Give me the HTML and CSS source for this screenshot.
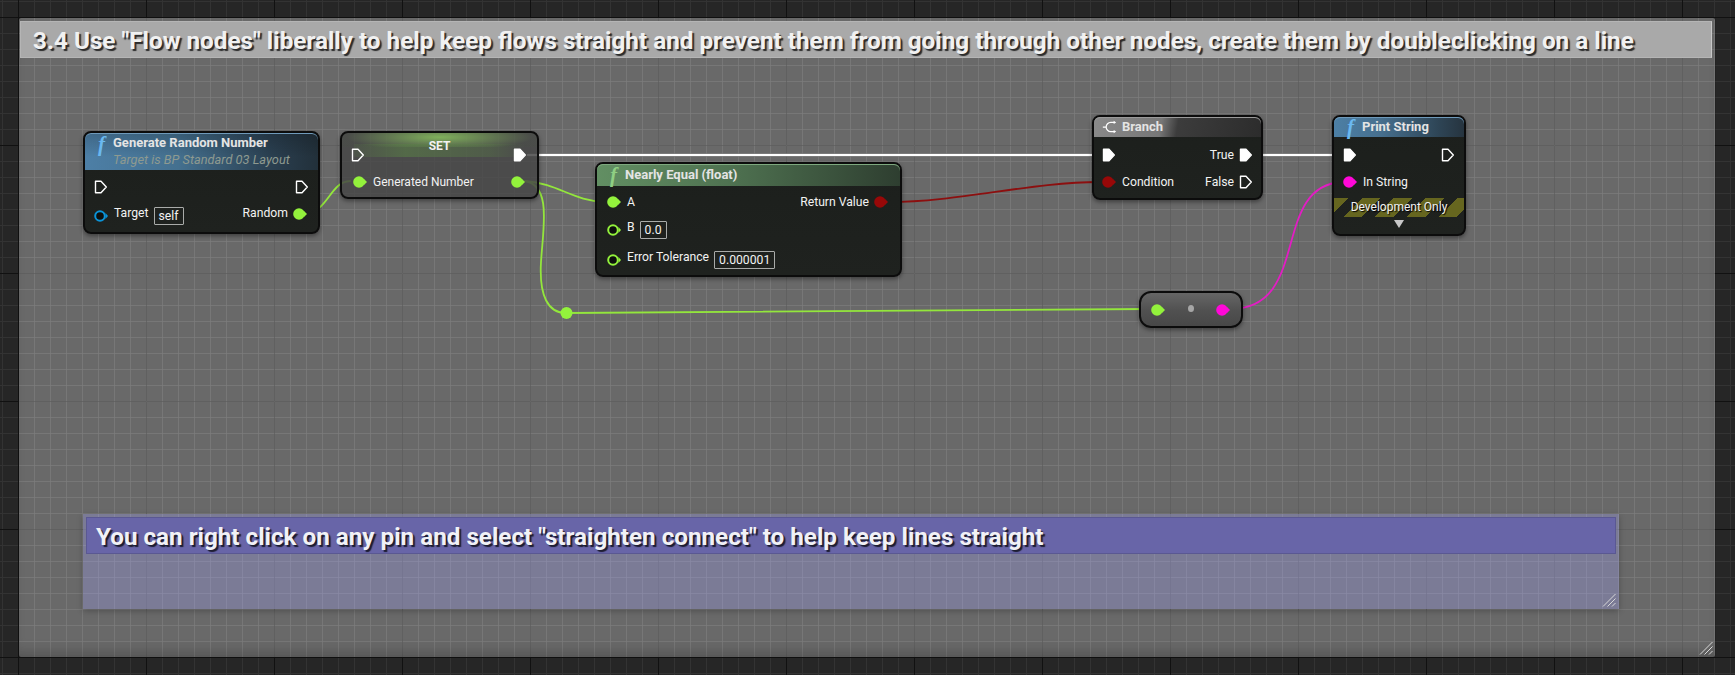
FILE: index.html
```html
<!DOCTYPE html>
<html lang="en">
<head>
<meta charset="utf-8">
<title>Blueprint graph</title>
<link rel="stylesheet" href="styles.css">
</head>
<body>
<svg class="defs" width="0" height="0">
  <symbol id="exec" viewBox="0 0 14 14"><path d="M1.5 1.2H7L12.300 7L7 12.800H1.500Z" fill="none" stroke="#fff" stroke-width="1.4" stroke-linejoin="round"/></symbol>
  <symbol id="exec-on" viewBox="0 0 14 14"><path d="M1.5 1.2H7L12.300 7L7 12.800H1.500Z" fill="#fff" stroke="#fff" stroke-width="1.4" stroke-linejoin="round"/></symbol>
  <symbol id="pin" viewBox="0 0 14 14"><path d="M11 4L14 7L11 10Z" fill="currentColor"/><circle cx="6" cy="7" r="5.800" fill="currentColor"/></symbol>
  <symbol id="pin-off" viewBox="0 0 14 14"><path d="M11.500 4L14 7L11.500 10Z" fill="currentColor"/><circle cx="6" cy="7" r="4.800" fill="#0d0f0d" stroke="currentColor" stroke-width="2"/></symbol>
  <symbol id="grip" viewBox="0 0 14 14"><path d="M1 13.500L13.500 1M5.500 13.500L13.500 5.500M10 13.500L13.500 10" fill="none" stroke="#d8d8d8" stroke-width="1"/></symbol>
</svg>

<main class="graph">
  <section class="frame">
    <h1 class="frame-title">3.4 Use "Flow nodes" liberally to help keep flows straight and prevent them from going through other nodes, create them by doubleclicking on a line</h1>
    <svg class="grip grip-frame"><use href="#grip"/></svg>
  </section>

  <section class="note">
    <h2 class="note-title">You can right click on any pin and select "straighten connect" to help keep lines straight</h2>
    <svg class="grip grip-note"><use href="#grip"/></svg>
  </section>

  <svg class="wires" width="1735" height="675" viewBox="0 0 1735 675">
    <g fill="none" stroke-linecap="round">
      <path class="wire-glow" d="M528 155H1100M1252 155H1342"/>
      <path class="wire-exec" d="M528 155H1100M1252 155H1342"/>
      <path class="wire-float" d="M305 214C328 212 330 182 350 181"/>
      <path class="wire-float" d="M525 181C560 184 572 201 606 202"/>
      <path class="wire-float" d="M525 181C552 186 543 228 541 262C539 296 548 313 566 313"/>
      <path class="wire-float" d="M566 313L1150 309"/>
      <path class="wire-bool" d="M888 202C960 202 1030 182 1100 182"/>
      <path class="wire-str" d="M1230 309C1312 309 1270 186 1342 182"/>
    </g>
    <circle cx="566.500" cy="313" r="6" fill="#93f23c"/>
  </svg>

  <article class="node node-random">
    <header class="head head-blue head-tall">
      <span class="fn fn-blue">f</span>
      <div class="head-text">
        <div class="title">Generate Random Number</div>
        <div class="subtitle">Target is BP Standard 03 Layout</div>
      </div>
    </header>
    <div class="row row-exec">
      <svg class="icon"><use href="#exec"/></svg>
      <svg class="icon"><use href="#exec"/></svg>
    </div>
    <div class="row row-data row-up">
      <span class="cell"><svg class="icon blue"><use href="#pin-off"/></svg><span>Target</span><span class="value">self</span></span>
      <span class="cell"><span>Random</span><svg class="icon green pin-raised"><use href="#pin"/></svg></span>
    </div>
  </article>

  <article class="node node-set">
    <div class="set-glow"></div>
    <div class="set-band"></div>
    <div class="set-title">SET</div>
    <div class="row row-exec">
      <svg class="icon"><use href="#exec"/></svg>
      <svg class="icon"><use href="#exec-on"/></svg>
    </div>
    <div class="row row-data">
      <span class="cell"><svg class="icon green"><use href="#pin"/></svg><span>Generated Number</span></span>
      <svg class="icon green"><use href="#pin"/></svg>
    </div>
  </article>

  <article class="node node-equal">
    <header class="head head-green">
      <span class="fn fn-green">f</span>
      <div class="title">Nearly Equal (float)</div>
    </header>
    <div class="row row-a">
      <span class="cell"><svg class="icon green"><use href="#pin"/></svg><span>A</span></span>
      <span class="cell"><span>Return Value</span><svg class="icon red"><use href="#pin"/></svg></span>
    </div>
    <div class="row row-b row-up">
      <span class="cell"><svg class="icon green"><use href="#pin-off"/></svg><span>B</span><span class="value">0.0</span></span>
    </div>
    <div class="row row-c row-up">
      <span class="cell"><svg class="icon green"><use href="#pin-off"/></svg><span>Error Tolerance</span><span class="value">0.000001</span></span>
    </div>
  </article>

  <article class="node node-branch">
    <header class="head head-gray">
      <svg class="branch-icon" viewBox="0 0 18 16"><path d="M1 8H5M15 2.500H10.500C7.500 2.500 5 5 5 8C5 11 7.500 13.500 10.500 13.500H15" fill="none" stroke="#fff" stroke-width="1.500"/><path d="M14 0.500L17 2.500L14 4.500ZM14 11.500L17 13.500L14 15.500Z" fill="#fff"/></svg>
      <div class="title">Branch</div>
    </header>
    <div class="row row-exec">
      <svg class="icon"><use href="#exec-on"/></svg>
      <span class="cell"><span>True</span><svg class="icon"><use href="#exec-on"/></svg></span>
    </div>
    <div class="row row-data">
      <span class="cell"><svg class="icon red"><use href="#pin"/></svg><span>Condition</span></span>
      <span class="cell"><span>False</span><svg class="icon"><use href="#exec"/></svg></span>
    </div>
  </article>

  <article class="node node-print">
    <header class="head head-blue">
      <span class="fn fn-blue">f</span>
      <div class="title">Print String</div>
    </header>
    <div class="row row-exec">
      <svg class="icon"><use href="#exec-on"/></svg>
      <svg class="icon"><use href="#exec"/></svg>
    </div>
    <div class="row row-data">
      <span class="cell"><svg class="icon magenta"><use href="#pin"/></svg><span>In String</span></span>
    </div>
    <div class="dev">Development Only</div>
    <div class="chevron"></div>
  </article>

  <article class="node node-reroute">
    <svg class="icon green"><use href="#pin"/></svg>
    <span class="knot"></span>
    <svg class="icon magenta"><use href="#pin"/></svg>
  </article>
</main>
</body>
</html>
```
FILE: styles.css
```css
* { box-sizing: border-box; }
html, body { margin: 0; padding: 0; background: #262626; }
.defs { position: absolute; }

.graph {
  position: relative;
  width: 1735px;
  height: 675px;
  overflow: hidden;
  font-family: Roboto, "Liberation Sans", sans-serif;
  color: #f2f2f2;
  background-color: #262626;
  background-image:
    linear-gradient(90deg, #111 1px, transparent 1px),
    linear-gradient(#111 1px, transparent 1px),
    linear-gradient(90deg, #333 1px, transparent 1px),
    linear-gradient(#333 1px, transparent 1px);
  background-size: 128px 128px, 128px 128px, 16px 16px, 16px 16px;
  background-position: 18px 17px, 18px 17px, 2px 1px, 2px 1px;
}

.frame {
  position: absolute;
  left: 19px;
  top: 18px;
  width: 1696px;
  height: 639px;
  padding: 3px 3px 0 1px;
  background-color: rgba(255, 255, 255, 0.31);
  background-image:
    linear-gradient(90deg, rgba(255, 255, 255, 0.03) 1px, transparent 1px),
    linear-gradient(rgba(255, 255, 255, 0.03) 1px, transparent 1px);
  background-size: 16px 16px;
  background-position: 15px 15px;
  border-radius: 2px;
  box-shadow: inset 0 -12px 14px -8px rgba(0, 0, 0, 0.22), 0 0 1px #000;
}
.frame-title {
  margin: 0;
  height: 37px;
  padding-left: 12px;
  font-size: 24.27px;
  line-height: 38px;
  font-weight: 700;
  color: #f1f1f1;
  white-space: nowrap;
  overflow: hidden;
  background: #a9a9a9;
  border: 1px solid #b5b5b5;
  border-right-color: #c8c8c8;
  text-shadow: 2px 2px 1px #2a2a2a;
}

.note {
  position: absolute;
  left: 83px;
  top: 514px;
  width: 1536px;
  height: 95px;
  padding: 3px;
  background: rgba(164, 164, 254, 0.3);
  box-shadow: 0 2px 6px rgba(0, 0, 0, 0.25);
}
.note-title {
  margin: 0;
  height: 37px;
  padding-left: 9px;
  font-size: 24.23px;
  line-height: 38px;
  font-weight: 700;
  color: #f1f1f6;
  white-space: nowrap;
  overflow: hidden;
  background: #6865a8;
  border: 1px solid #5a5892;
  text-shadow: 2px 2px 1px #1c1c30;
}

.grip { position: absolute; width: 14px; height: 14px; }
.grip-frame { right: 2px; bottom: 2px; }
.grip-note { right: 3px; bottom: 2px; }

.wires { position: absolute; left: 0; top: 0; }
.wire-exec { stroke: #fff; stroke-width: 2.4; }
.wire-glow { stroke: rgba(60, 60, 60, 0.6); stroke-width: 4; }
.wire-float { stroke: #93e63c; stroke-width: 1.8; }
.wire-bool { stroke: #8c0f0f; stroke-width: 1.8; }
.wire-str { stroke: #e31cc4; stroke-width: 1.8; }

.node {
  position: absolute;
  font-size: 12.2px;
  line-height: 16px;
  background: linear-gradient(#1c1f1c, #1f221f);
  border: 2px solid #0c0c0c;
  border-radius: 8px;
  box-shadow: 0 2px 4px rgba(0, 0, 0, 0.4);
}
.node-random { left: 83px; top: 131px; width: 237px; height: 103px; }
.node-set { left: 340px; top: 131px; width: 199px; height: 68px; background: rgba(70, 70, 70, 0.85); overflow: hidden; }
.node-equal { left: 595px; top: 162px; width: 307px; height: 115px; }
.node-branch { left: 1092px; top: 115px; width: 171px; height: 85px; }
.node-print { left: 1332px; top: 115px; width: 134px; height: 121px; }

.node-reroute {
  left: 1139px;
  top: 291px;
  width: 104px;
  height: 37px;
  padding: 0 11px 0 10px;
  display: flex;
  align-items: center;
  justify-content: space-between;
  border-radius: 12px;
  background: linear-gradient(#666, #505050 55%, #484848);
}
.knot { width: 6px; height: 7px; margin-top: -3px; border-radius: 50%; background: #a6a6a6; }

.head {
  display: flex;
  align-items: center;
  gap: 5px;
  height: 20px;
  padding-left: 10px;
  border-radius: 6px 6px 0 0;
  font-size: 13px;
  font-weight: 700;
  color: #e4e4e4;
}
.node-equal .head { height: 22px; }
.head-tall { height: 37px; }
.head-blue { background: linear-gradient(90deg, #4c7fa5, #47708f 35%, #2e4556 80%, #26343f); box-shadow: inset 0 1px 0 #6f9aba; }
.head-green { background: linear-gradient(90deg, #628f63, #4e7150 45%, #2e3e30); box-shadow: inset 0 1px 0 #7ea97f; }
.head-gray { padding-left: 8px; background: linear-gradient(100deg, #8a8a8a, #777 40%, #3c3c3c 50%, #2c2c2c); box-shadow: inset 0 1px 0 #9a9a9a; }
.head-tall {
  background:
    linear-gradient(rgba(0, 0, 0, 0.18), transparent 65%),
    linear-gradient(90deg, #4d7fa6, #44708f 40%, #2a3f50 80%, #22303a);
}
.head-tall .fn { align-self: flex-start; margin-top: 1px; }

.fn { font-family: "Liberation Serif", serif; font-style: italic; font-size: 21px; line-height: 20px; font-weight: 700; width: 13px; text-align: center; }
.fn-blue { color: #6ab8f0; }
.fn-green { color: #8fcf83; }
.branch-icon { width: 15px; height: 14px; flex: none; }
.head-text { display: flex; flex-direction: column; gap: 1px; }
.subtitle { font-size: 12.8px; font-weight: 400; font-style: italic; color: #8e9a90; }

.row { display: flex; align-items: center; justify-content: space-between; padding: 0 9px; }
.cell { display: flex; align-items: center; gap: 5px; }
.cell > .icon:first-child { margin-right: 1px; }
.row-up .cell > span:not(.value) { margin-bottom: 6px; }
.icon { width: 14px; height: 14px; flex: none; color: #fff; }
.pin-raised { margin-bottom: 4px; }
.green { color: #93f23c; }
.blue { color: #0a93d8; }
.red { color: #980808; }
.magenta { color: #ff08d8; }
.value { padding: 0 4px; height: 18px; line-height: 17px; border: 1px solid #a9aba9; border-radius: 1px; }

.node-random .row-exec { height: 34px; }
.node-random .row-data { height: 24px; padding-right: 11px; }

.set-glow { position: absolute; left: 0; right: 0; top: 0; height: 14px; background: radial-gradient(ellipse 50% 100% at 50% 30%, rgba(140, 200, 95, 0.8), rgba(70, 90, 60, 0.1) 95%); }
.set-band { position: absolute; left: 12px; right: 12px; top: 11px; height: 13px; background: linear-gradient(90deg, rgba(90, 130, 70, 0.15), rgba(90, 130, 70, 0.55) 30%, rgba(90, 130, 70, 0.3) 80%, transparent); }
.set-title { position: relative; height: 16px; margin-top: 5px; text-align: center; font-size: 12px; font-weight: 700; }
.node-set .row { position: relative; }
.node-set .row-exec { height: 16px; margin-top: -7px; padding: 0 10px 0 9px; }
.node-set .row-data { height: 24px; margin-top: 7px; padding: 0 12px 0 11px; font-size: 12px; }

.node-equal .row-a { height: 32px; padding: 0 12px 0 10px; }
.node-equal .row-b { height: 24px; justify-content: flex-start; padding-left: 10px; }
.node-equal .row-c { height: 24px; margin-top: 6px; justify-content: flex-start; padding-left: 10px; }

.node-branch .row { padding: 0 8px; }
.node-branch .row-exec { height: 36px; }
.node-branch .row-data { height: 18px; }

.node-print .row-exec { height: 36px; }
.node-print .row-data { height: 18px; justify-content: flex-start; }

.dev {
  height: 19px;
  margin-top: 7px;
  text-align: center;
  font-size: 12px;
  line-height: 18px;
  color: #f2f2f2;
  text-shadow: 1px 1px 1px #000;
  background: repeating-linear-gradient(135deg, #66661f 0 10px, transparent 10px 19.8px, #66661f 19.8px 22.6px);
}
.chevron {
  width: 0;
  height: 0;
  margin: 3px auto 0;
  border-left: 5.5px solid transparent;
  border-right: 5.5px solid transparent;
  border-top: 8px solid #c8c8c8;
}
```
